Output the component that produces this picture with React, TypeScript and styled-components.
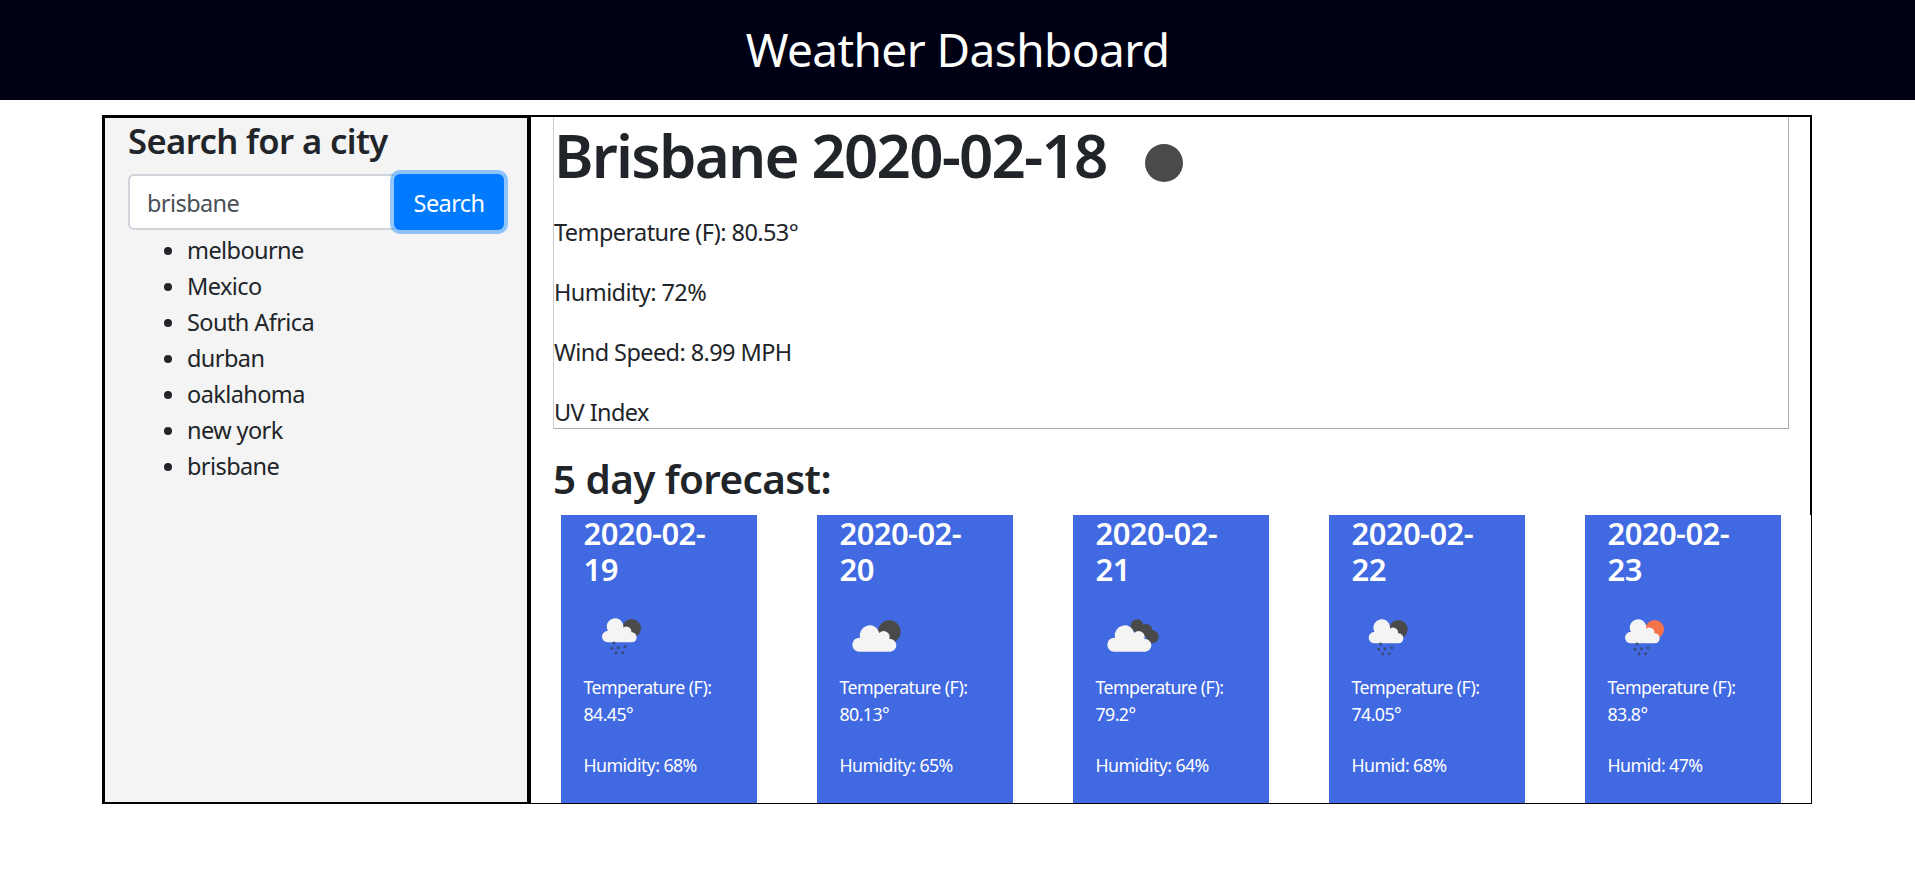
import React from "react";
import styled, { createGlobalStyle } from "styled-components";

const Global = createGlobalStyle`
  body {
    margin: 0;
    background: #fff;
    color: #212529;
    font-family: "Noto Sans", "Open Sans", sans-serif;
    font-size: 23.5px;
    line-height: 36px;
    letter-spacing: -0.025em;
  }
`;

const Header = styled.header`
  box-sizing: border-box;
  height: 100px;
  padding-bottom: 3px;
  background: #000014;
  color: #fff;
  display: flex;
  align-items: center;
  justify-content: center;
  font-size: 46px;
`;

const Board = styled.div`
  box-sizing: border-box;
  display: flex;
  width: 1710px;
  height: 689px;
  margin: 15px 0 0 102px;
  border: 1px solid #000;
`;

const Sidebar = styled.aside`
  box-sizing: border-box;
  width: 428px;
  margin-bottom: -2px;
  padding: 0 23px;
  background: #f4f4f4;
  border-style: solid;
  border-color: #000;
  border-width: 2px 4px 3px 2px;
`;

const SideTitle = styled.h3`
  margin: 4px 0 14px;
  font-size: 34.6px;
  font-weight: 600;
  line-height: 38px;
`;

const SearchRow = styled.div`
  display: flex;
  height: 56px;
  width: 376px;
`;

const SearchInput = styled.input`
  box-sizing: border-box;
  width: 266px;
  height: 56px;
  padding: 2px 17px 0;
  border: 2px solid #ced4da;
  border-right: 0;
  border-radius: 6px 0 0 6px;
  background: #fff;
  color: #495057;
  font: inherit;
  letter-spacing: inherit;
  outline: none;
`;

const SearchButton = styled.button`
  width: 110px;
  height: 56px;
  padding: 2px 0 0;
  border: 0;
  border-radius: 6px;
  background: #007bff;
  box-shadow: 0 0 0 4px rgba(38, 143, 255, 0.5);
  color: #fff;
  font: inherit;
  letter-spacing: inherit;
`;

const CityList = styled.ul`
  margin: 2px 0 0;
  padding: 0 0 0 59px;
`;

const Main = styled.main`
  flex: 1;
  min-width: 0;
  display: flex;
  flex-direction: column;
`;

const TodaySection = styled.section`
  box-sizing: border-box;
  height: 399px;
  padding: 0 21px 0 22px;
  border-top: 1px solid #000;
  border-right: 1px solid #000;
`;

const TodayBox = styled.div`
  box-sizing: border-box;
  height: 312px;
  border: 1px solid #aaa;
  border-top: 0;
  border-left-color: #ccc;
`;

const TodayTitle = styled.h1`
  display: flex;
  align-items: center;
  margin: 0 0 20px;
  height: 77px;
  font-size: 60px;
  font-weight: 600;
  letter-spacing: -0.03em;
  line-height: 77px;
`;

const CurrentIcon = styled.span`
  width: 38px;
  height: 38px;
  margin: 14px 0 0 38px;
  border-radius: 50%;
  background: #4a4a4a;
`;

const Stat = styled.p`
  margin: 0 0 24px;
`;

const ForecastTitle = styled.h2`
  margin: 26px 0 0;
  font-size: 40.4px;
  font-weight: 600;
  line-height: 48px;
`;

const CardRow = styled.div`
  flex: 1;
  min-height: 0;
  display: flex;
  gap: 60px;
  padding-left: 30px;
`;

const Card = styled.article`
  box-sizing: border-box;
  width: 196px;
  padding: 0 23px 0 22.5px;
  background: #4169e1;
  color: #fff;
`;

const CardDate = styled.h5`
  margin: 0;
  font-size: 31px;
  font-weight: 600;
  line-height: 36px;
`;

const CardIcon = styled.svg`
  display: block;
  width: 90px;
  height: 60px;
  margin: 18px 0 9px;
  overflow: visible;
`;

const CardText = styled.p`
  margin: 0 0 25px;
  font-size: 17.8px;
  line-height: 26.7px;
`;

const CityItem = styled.li``;

const cities = ["melbourne", "Mexico", "South Africa", "durban", "oaklahoma", "new york", "brisbane"];

type Sky = "rain" | "clear" | "broken";

const forecast: { date: string; temp: string; hum: string; sky: Sky; sun: string; dx: number; dy: number }[] = [
  { date: "2020-02-19", temp: "84.45°", hum: "Humidity: 68%", sky: "rain", sun: "#4a4a4a", dx: 18, dy: 0 },
  { date: "2020-02-20", temp: "80.13°", hum: "Humidity: 65%", sky: "clear", sun: "#4a4a4a", dx: 0, dy: 0 },
  { date: "2020-02-21", temp: "79.2°", hum: "Humidity: 64%", sky: "broken", sun: "#4a4a4a", dx: -3, dy: 0 },
  { date: "2020-02-22", temp: "74.05°", hum: "Humid: 68%", sky: "rain", sun: "#4a4a4a", dx: 14, dy: 3 },
  { date: "2020-02-23", temp: "83.8°", hum: "Humid: 47%", sky: "rain", sun: "#f5734a", dx: 15, dy: 3 },
];

const bigCloud = "M56 140 A21 21 0 0 1 60 98 A29 29 0 1 1 118 84 A18 18 0 0 1 148 102 A19 19 0 0 1 152 140 Z";
const smallCloud = "M52 112 A17 17 0 0 1 54 78 A25 25 0 1 1 100 68 A15 15 0 0 1 124 82 A15 15 0 0 1 126 112 Z";
const rainDrops = [[72, 114], [66, 130], [85, 128], [105, 125], [78, 143], [98, 143]];

function WeatherIcon({ sky, sun, dx, dy }: { sky: Sky; sun: string; dx: number; dy: number }) {
  return (
    <CardIcon viewBox="0 0 270 180">
      <g transform={`translate(${dx} ${dy})`}>
        {sky === "rain" && (
          <>
            <circle cx="125" cy="70" r="28" fill={sun} />
            <path d={smallCloud} fill="#f4f4f4" />
            {rainDrops.map(([x, y]) => (
              <circle key={`${x}-${y}`} cx={x} cy={y} r="4.5" fill="#3b4a78" />
            ))}
          </>
        )}
        {sky === "clear" && (
          <>
            <circle cx="148" cy="80" r="34" fill={sun} />
            <path d={bigCloud} fill="#f4f4f4" />
          </>
        )}
        {sky === "broken" && (
          <>
            <circle cx="126" cy="62" r="19" fill={sun} />
            <circle cx="153" cy="76" r="19" fill={sun} />
            <circle cx="172" cy="95" r="19" fill={sun} />
            <path d={bigCloud} fill="#f4f4f4" />
          </>
        )}
      </g>
    </CardIcon>
  );
}

export default function App() {
  return (
    <>
      <Global />
      <Header>Weather Dashboard</Header>
      <Board>
        <Sidebar>
          <SideTitle>Search for a city</SideTitle>
          <SearchRow>
            <SearchInput defaultValue="brisbane" />
            <SearchButton>Search</SearchButton>
          </SearchRow>
          <CityList>
            {cities.map((city) => (
              <CityItem key={city}>{city}</CityItem>
            ))}
          </CityList>
        </Sidebar>
        <Main>
          <TodaySection>
            <TodayBox>
              <TodayTitle>
                Brisbane 2020-02-18
                <CurrentIcon />
              </TodayTitle>
              <Stat>Temperature (F): 80.53°</Stat>
              <Stat>Humidity: 72%</Stat>
              <Stat>Wind Speed: 8.99 MPH</Stat>
              <Stat>UV Index</Stat>
            </TodayBox>
            <ForecastTitle>5 day forecast:</ForecastTitle>
          </TodaySection>
          <CardRow>
            {forecast.map((day) => (
              <Card key={day.date}>
                <CardDate>{day.date}</CardDate>
                <WeatherIcon sky={day.sky} sun={day.sun} dx={day.dx} dy={day.dy} />
                <CardText>
                  Temperature (F):
                  <br />
                  {day.temp}
                </CardText>
                <CardText>{day.hum}</CardText>
              </Card>
            ))}
          </CardRow>
        </Main>
      </Board>
    </>
  );
}
